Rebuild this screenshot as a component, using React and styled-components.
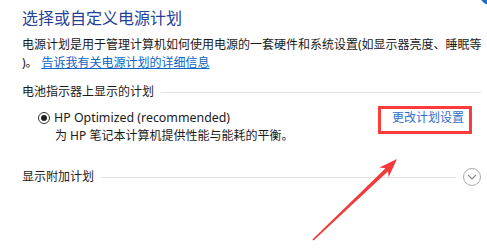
import styled, { createGlobalStyle } from 'styled-components';

const GlobalStyle = createGlobalStyle`
  body {
    margin: 0;
    background: #fff;
    font-family: "Noto Sans", "Noto Sans CJK SC", sans-serif;
  }
`;

const Page = styled.div`
  position: relative;
  width: 487px;
  height: 250px;
  overflow: hidden;
  box-sizing: border-box;
  padding: 7px 0 0 22px;
  color: #1a1a1a;
`;

const Title = styled.h1`
  margin: 0;
  font-weight: normal;
  font-size: 16px;
  line-height: 22px;
  color: #24409a;
`;

const Intro = styled.p`
  margin: 7px 0 0;
  font-size: 12px;
  line-height: 18px;
  white-space: nowrap;
`;

const Link = styled.a`
  color: #0a63c8;
  text-decoration: underline;
  margin-left: 4px;
`;

const SectionHeader = styled.div`
  display: flex;
  align-items: center;
  gap: ${({ $gap }) => $gap}px;
  margin-top: ${({ $top }) => $top}px;
  margin-right: ${({ $right }) => $right}px;
  font-size: 12px;
  line-height: 18px;
`;

const Rule = styled.div`
  flex: 1;
  height: 1px;
  background: #e2e2e2;
`;

const PlanRow = styled.div`
  display: flex;
  align-items: flex-start;
  justify-content: space-between;
  margin: 8px 15px 0 16px;
`;

const PlanInfo = styled.div`
  display: flex;
  flex-direction: column;
`;

const PlanLabel = styled.label`
  display: flex;
  align-items: center;
  gap: 4px;
  font-size: 12.4px;
  line-height: 18px;
`;

const Radio = styled.span`
  width: 12px;
  height: 12px;
  box-sizing: border-box;
  border: 1px solid #333;
  border-radius: 50%;
  display: flex;
  align-items: center;
  justify-content: center;

  &::after {
    content: '';
    width: 6px;
    height: 6px;
    border-radius: 50%;
    background: #222;
  }
`;

const PlanDesc = styled.div`
  padding-left: 17px;
  font-size: 12px;
  line-height: 18px;
`;

const Highlight = styled.div`
  margin-top: -3px;
  border: 3px solid #ff3b3b;
  padding: 0 5px 4px 11px;
  font-size: 12px;
  line-height: 18px;
`;

const SettingsLink = styled.a`
  color: #2f6fcc;
  text-decoration: none;
`;

const ExpandButton = styled.span`
  width: 18px;
  height: 18px;
  box-sizing: border-box;
  border: 1px solid #a8a8a8;
  border-radius: 50%;
  display: flex;
  align-items: center;
  justify-content: center;
`;

const CornerBadge = styled.span`
  position: absolute;
  top: -15px;
  right: -13px;
  width: 20px;
  height: 20px;
  border-radius: 50%;
  background: #1a6fc9;
`;

const Arrow = styled.svg`
  position: absolute;
  left: 0;
  top: 0;
  pointer-events: none;
`;

export default function App() {
  return (
    <>
      <GlobalStyle />
      <Page>
        <CornerBadge />
        <Title>选择或自定义电源计划</Title>
        <Intro>
          电源计划是用于管理计算机如何使用电源的一套硬件和系统设置(如显示器亮度、睡眠等
          <br />
          )。<Link href="#">告诉我有关电源计划的详细信息</Link>
        </Intro>

        <SectionHeader $top={11} $gap={7} $right={6}>
          电池指示器上显示的计划
          <Rule />
        </SectionHeader>

        <PlanRow>
          <PlanInfo>
            <PlanLabel>
              <Radio />
              HP Optimized (recommended)
            </PlanLabel>
            <PlanDesc>为 HP 笔记本计算机提供性能与能耗的平衡。</PlanDesc>
          </PlanInfo>
          <Highlight>
            <SettingsLink href="#">更改计划设置</SettingsLink>
          </Highlight>
        </PlanRow>

        <SectionHeader $top={23} $gap={7} $right={6}>
          显示附加计划
          <Rule />
          <ExpandButton>
            <svg width="10" height="6" viewBox="0 0 10 6">
              <path d="M1 1 L5 5 L9 1" fill="none" stroke="#888" strokeWidth="1.2" />
            </svg>
          </ExpandButton>
        </SectionHeader>

        <Arrow width="487" height="250" viewBox="0 0 487 250">
          <polygon
            points="397,159 388.6,177.2 388.1,171.2 313.6,240.6 312.4,239.4 385.5,168.2 379.4,167.6"
            fill="#f23a3a"
          />
        </Arrow>
      </Page>
    </>
  );
}
